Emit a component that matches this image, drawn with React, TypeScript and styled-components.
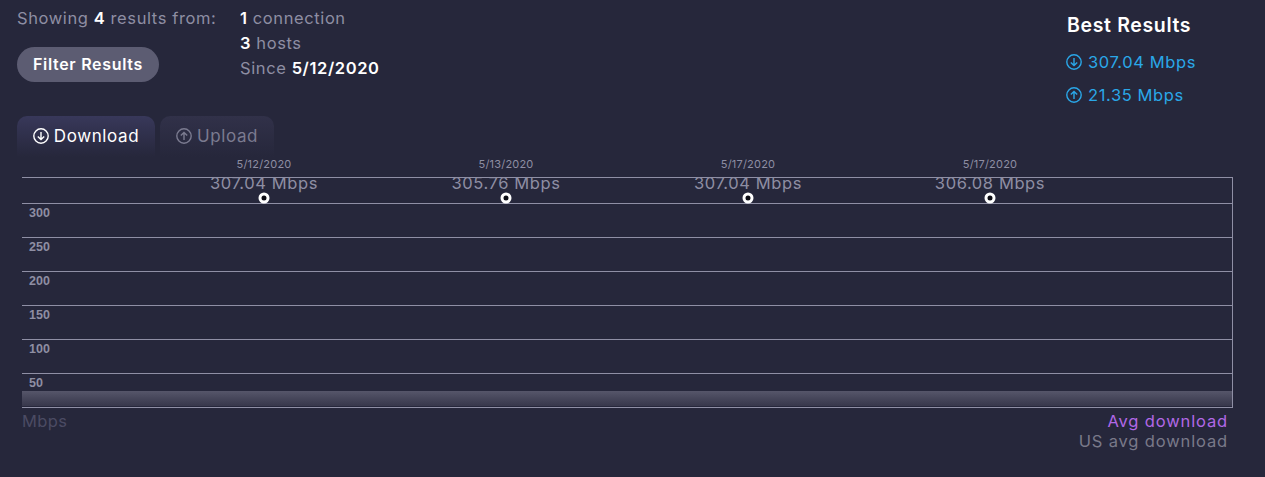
import { createGlobalStyle, styled } from "styled-components";
import React from "react";

const GlobalStyle = createGlobalStyle`
  html, body {
    margin: 0;
    background: #26273b;
    font-family: Inter, "Liberation Sans", sans-serif;
  }
`;

const Page = styled.div`
  width: 1265px;
  height: 477px;
  overflow: hidden;
  box-sizing: border-box;
  padding: 6px 0 0 17px;
  color: #8e8ea3;
`;

const Summary = styled.div`
  display: flex;
  height: 110px;
`;

const FilterColumn = styled.div`
  width: 223px;
`;

const Line = styled.div`
  font-size: 16.5px;
  letter-spacing: 0.6px;
  line-height: 25px;
  height: 25px;
  white-space: nowrap;
`;

const Strong = styled.b`
  color: #fff;
  font-weight: 600;
`;

const FilterButton = styled.button`
  display: block;
  margin-top: 16px;
  width: 142px;
  height: 35px;
  padding: 0 0 2px;
  border: 0;
  border-radius: 18px;
  background: #5c5c72;
  color: #fff;
  font: 600 16px Inter, "Liberation Sans", sans-serif;
  letter-spacing: 0.7px;
`;

const StatsColumn = styled.div`
  flex: 1;
`;

const BestColumn = styled.div`
  width: 198px;
`;

const BestTitle = styled.div`
  margin: 6px 0 7px;
  color: #fff;
  font-size: 19.5px;
  font-weight: 600;
  letter-spacing: 0.65px;
  line-height: 26px;
`;

const BestValue = styled.div`
  display: flex;
  align-items: center;
  gap: 6px;
  height: 33px;
  margin-left: -1px;
  color: #2aa7e8;
  font-size: 16.5px;
  letter-spacing: 0.6px;
`;

const Tabs = styled.div`
  display: flex;
  gap: 5px;
  height: 41px;
`;

const Tab = styled.div<{ $active?: boolean }>`
  display: flex;
  align-items: center;
  justify-content: center;
  gap: 5px;
  box-sizing: border-box;
  width: ${(p) => (p.$active ? "138px" : "114px")};
  padding-bottom: 1px;
  border-radius: 10px 10px 0 0;
  background: ${(p) =>
    p.$active
      ? "linear-gradient(#36365100, #26273b), #38385a"
      : "linear-gradient(#30304600, #26273b), #313149"};
  color: ${(p) => (p.$active ? "#fff" : "#7b7b90")};
  font-size: 17px;
  letter-spacing: 0.6px;
`;

const Chart = styled.svg`
  display: block;
  margin-left: -17px;
`;

const Footer = styled.div`
  display: flex;
  justify-content: space-between;
  margin: 3px 37px 0 5px;
`;

const AxisUnit = styled.div`
  color: #4b4b63;
  font-size: 16.5px;
  letter-spacing: 0.4px;
  line-height: 20px;
`;

const Legend = styled.div`
  text-align: right;
  font-size: 16.5px;
  letter-spacing: 0.85px;
  line-height: 20px;
`;

const LegendItem = styled.div<{ $color: string }>`
  color: ${(p) => p.$color};
`;

function ArrowCircle({ up, size = 16 }: { up?: boolean; size?: number }) {
  return (
    <svg width={size} height={size} viewBox="0 0 16 16" fill="none" stroke="currentColor" strokeWidth="1.4">
      <circle cx="8" cy="8" r="7.2" />
      {up ? <path d="M8 12V4.5M4.8 7.6 8 4.4l3.2 3.2" /> : <path d="M8 4v7.5M4.8 8.4 8 11.6l3.2-3.2" />}
    </svg>
  );
}

const gridLines = [177, 203, 237, 271, 305, 339, 373, 407];
const yLabels = [
  { y: 217, label: "300" },
  { y: 251, label: "250" },
  { y: 285, label: "200" },
  { y: 319, label: "150" },
  { y: 353, label: "100" },
  { y: 387, label: "50" },
];
const points = [
  { x: 264, date: "5/12/2020", value: "307.04 Mbps" },
  { x: 506, date: "5/13/2020", value: "305.76 Mbps" },
  { x: 748, date: "5/17/2020", value: "307.04 Mbps" },
  { x: 990, date: "5/17/2020", value: "306.08 Mbps" },
];

// chart uses page coordinates, shifted up by where the svg starts
const CHART_TOP = 157;

function ResultsChart() {
  return (
    <Chart width={1265} height={251} viewBox={`0 ${CHART_TOP} 1265 251`}>
      <defs>
        <linearGradient id="band" x1="0" y1="0" x2="0" y2="1">
          <stop offset="0" stopColor="#56566a" />
          <stop offset="0.5" stopColor="#46465a" />
          <stop offset="1" stopColor="#38384c" />
        </linearGradient>
      </defs>
      <rect x="22" y="391" width="1210" height="15" fill="url(#band)" />
      {gridLines.map((y) => (
        <line key={y} x1="22" x2="1233" y1={y + 0.5} y2={y + 0.5} stroke="#8f8fa5" />
      ))}
      <line x1="1232.5" x2="1232.5" y1="177" y2="407" stroke="#8f8fa5" />
      {yLabels.map((l) => (
        <text key={l.label} x="29" y={l.y} fill="#8e8ea3" fontFamily="'Liberation Sans', sans-serif" fontSize="12.5" fontWeight="700">
          {l.label}
        </text>
      ))}
      {points.map((p) => (
        <g key={p.x}>
          <text x={p.x} y="168" textAnchor="middle" fill="#8e8ea3" fontSize="11" letterSpacing="0.2">
            {p.date}
          </text>
          <text x={p.x} y="189" textAnchor="middle" fill="#8e8ea3" fontSize="16.5" letterSpacing="0.6">
            {p.value}
          </text>
          <circle cx={p.x} cy="198" r="4" fill="#0c0c14" stroke="#fff" strokeWidth="3" />
        </g>
      ))}
    </Chart>
  );
}

export default function App() {
  return (
    <>
      <GlobalStyle />
      <Page>
        <Summary>
          <FilterColumn>
            <Line>
              Showing <Strong>4</Strong> results from:
            </Line>
            <FilterButton>Filter Results</FilterButton>
          </FilterColumn>
          <StatsColumn>
            <Line>
              <Strong>1</Strong> connection
            </Line>
            <Line>
              <Strong>3</Strong> hosts
            </Line>
            <Line>
              Since <Strong>5/12/2020</Strong>
            </Line>
          </StatsColumn>
          <BestColumn>
            <BestTitle>Best Results</BestTitle>
            <BestValue>
              <ArrowCircle />
              307.04 Mbps
            </BestValue>
            <BestValue>
              <ArrowCircle up />
              21.35 Mbps
            </BestValue>
          </BestColumn>
        </Summary>
        <Tabs>
          <Tab $active>
            <ArrowCircle />
            Download
          </Tab>
          <Tab>
            <ArrowCircle up />
            Upload
          </Tab>
        </Tabs>
        <ResultsChart />
        <Footer>
          <AxisUnit>Mbps</AxisUnit>
          <Legend>
            <LegendItem $color="#b267e6">Avg download</LegendItem>
            <LegendItem $color="#797989">US avg download</LegendItem>
          </Legend>
        </Footer>
      </Page>
    </>
  );
}
